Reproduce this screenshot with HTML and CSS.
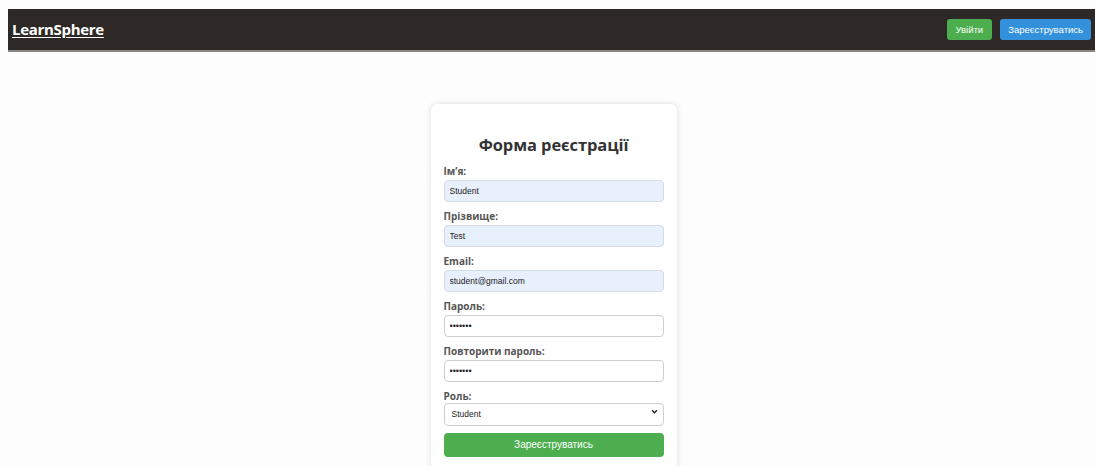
FILE: index.html
```html
<!DOCTYPE html>
<html lang="uk">
<head>
<meta charset="utf-8">
<title>LearnSphere — Реєстрація</title>
<link rel="stylesheet" href="styles.css">
</head>
<body>
<header class="topbar">
  <a class="brand" href="#">LearnSphere</a>
  <nav class="auth">
    <a class="btn btn-green" href="#">Увійти</a>
    <a class="btn btn-blue" href="#">Зареєструватись</a>
  </nav>
</header>

<main class="page">
  <form class="card">
    <h2 class="card-title">Форма реєстрації</h2>

    <label class="field-label" for="fname">Ім’я:</label>
    <input class="field autofill" id="fname" type="text" value="Student">

    <label class="field-label" for="lname">Прізвище:</label>
    <input class="field autofill" id="lname" type="text" value="Test">

    <label class="field-label" for="email">Email:</label>
    <input class="field autofill" id="email" type="email" value="student@gmail.com">

    <label class="field-label" for="pass">Пароль:</label>
    <input class="field" id="pass" type="password" value="1234567">

    <label class="field-label" for="pass2">Повторити пароль:</label>
    <input class="field" id="pass2" type="password" value="1234567">

    <label class="field-label" for="role">Роль:</label>
    <div class="select-wrap">
      <select class="field select" id="role">
        <option>Student</option>
        <option>Teacher</option>
      </select>
      <svg class="chevron" viewBox="0 0 10 10" width="7" height="7" aria-hidden="true">
        <path d="M1.5 3.2 L5 6.7 L8.5 3.2" fill="none" stroke="#222" stroke-width="2"/>
      </svg>
    </div>

    <button class="submit" type="button">Зареєструватись</button>
  </form>
</main>
</body>
</html>
```

FILE: styles.css
```css
* {
  box-sizing: border-box;
}

html, body {
  height: 100%;
}

body {
  margin: 9px 0 0 8px;
  background: #fdfdfd;
  font-family: "Open Sans", "Noto Sans", sans-serif;
  color: #333;
  overflow: hidden;
}

/* top navigation bar */
.topbar {
  height: 43px;
  background: #2e2927;
  border-bottom: 2px solid #8a8886;
  display: flex;
  align-items: center;
  justify-content: space-between;
  padding: 0 4px 0 4px;
}

.brand {
  color: #fff;
  font-family: "Open Sans", sans-serif;
  font-weight: 700;
  font-size: 15px;
  letter-spacing: -0.3px;
  text-decoration: underline;
  text-underline-offset: 2px;
  margin-top: -1px;
}

.auth {
  display: flex;
  gap: 8px;
  margin-top: -1px;
}

.btn {
  display: inline-flex;
  align-items: center;
  height: 21px;
  padding: 0 8px;
  border-radius: 3px;
  color: #fff;
  font-family: "Liberation Sans", Arial, sans-serif;
  font-size: 9.5px;
  text-decoration: none;
}

.btn-green {
  background: #4cae4f;
  padding: 0 9px;
}

.btn-blue {
  background: #3391dc;
  padding: 0 8px;
}

/* registration card */
.page {
  display: flex;
  justify-content: center;
  padding: 52px 0 0 4px;
}

.card {
  width: 246px;
  min-height: 380px;
  background: #fff;
  border-radius: 7px;
  box-shadow: 0 0 6px rgba(0, 0, 0, 0.13);
  padding: 29px 13px 0 13px;
  display: flex;
  flex-direction: column;
}

.card-title {
  margin: 0 0 8px 0;
  text-align: center;
  font-size: 16.5px;
  font-weight: 700;
  color: #333;
  letter-spacing: -0.1px;
}

.field-label {
  font-size: 10px;
  font-weight: 700;
  color: #555;
  margin-bottom: 2px;
  line-height: 14px;
}

.field {
  width: 100%;
  height: 22px;
  margin: 0 0 7px 0;
  padding: 0 5px;
  border: 1px solid #cfcfcf;
  border-radius: 4px;
  background: #fff;
  font-family: "Liberation Sans", Arial, sans-serif;
  font-size: 8.5px;
  color: #222;
  outline: none;
}

.field.autofill {
  background: #e8f0fd;
  border-color: #d4dbe6;
}

.field[type="password"] {
  font-size: 9px;
  letter-spacing: 0;
}

.select-wrap {
  position: relative;
  margin-top: -5px;
}

.select {
  appearance: none;
  -webkit-appearance: none;
  padding-left: 7px;
  height: 23px;
  margin-bottom: 7px;
}

.chevron {
  position: absolute;
  right: 6px;
  top: 8px;
  pointer-events: none;
}

.submit {
  width: 100%;
  height: 24px;
  border: none;
  border-radius: 4px;
  background: #4cae4f;
  color: #fff;
  font-family: "Liberation Sans", Arial, sans-serif;
  font-size: 10px;
  cursor: pointer;
}
```
